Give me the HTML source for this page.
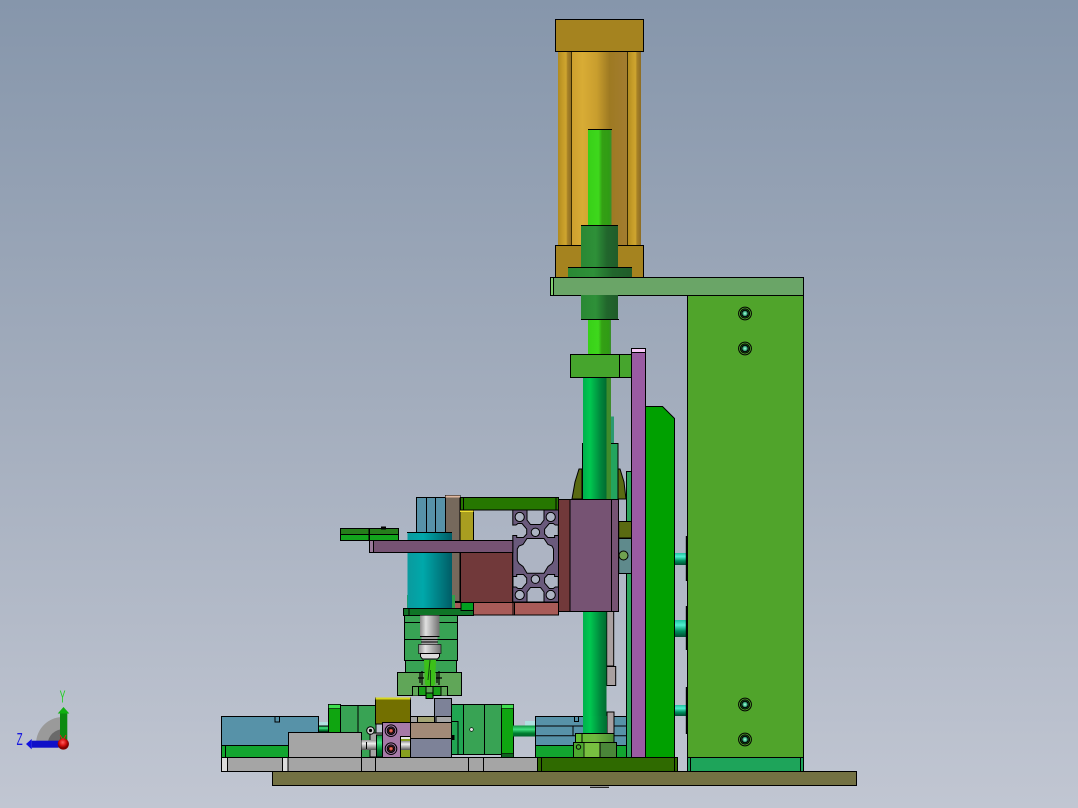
<!DOCTYPE html>
<html>
<head>
<meta charset="utf-8">
<style>
html,body{margin:0;padding:0;width:1078px;height:808px;overflow:hidden;background:#a5aebd}
svg{display:block}
</style>
</head>
<body>
<svg width="1078" height="808" viewBox="0 0 1078 808" xmlns="http://www.w3.org/2000/svg">
<defs>
<linearGradient id="bg" x1="0" y1="0" x2="0" y2="1"><stop offset="0" stop-color="#8696ab"/><stop offset=".5" stop-color="#a3adbd"/><stop offset="1" stop-color="#c1c6d2"/></linearGradient>
<linearGradient id="gold"><stop offset="0" stop-color="#cda02e"/><stop offset=".2" stop-color="#d8ac35"/><stop offset=".45" stop-color="#c99e2e"/><stop offset=".68" stop-color="#9e7a22"/><stop offset="1" stop-color="#a37c30"/></linearGradient>
<linearGradient id="tie"><stop offset="0" stop-color="#b08a20"/><stop offset=".35" stop-color="#c59c28"/><stop offset=".6" stop-color="#cfa530"/><stop offset=".7" stop-color="#a88326"/><stop offset="1" stop-color="#8d6c25"/></linearGradient>
<linearGradient id="rod"><stop offset="0" stop-color="#38d018"/><stop offset=".45" stop-color="#3ed81c"/><stop offset=".6" stop-color="#34a014"/><stop offset=".9" stop-color="#309c14"/><stop offset="1" stop-color="#3c8c30"/></linearGradient>
<linearGradient id="dk"><stop offset="0" stop-color="#2a8834"/><stop offset=".4" stop-color="#2e9038"/><stop offset=".7" stop-color="#21662c"/><stop offset="1" stop-color="#205c2a"/></linearGradient>
<linearGradient id="lr"><stop offset="0" stop-color="#00b04c"/><stop offset=".3" stop-color="#00c850"/><stop offset=".75" stop-color="#00863c"/><stop offset="1" stop-color="#006c30"/></linearGradient>
<linearGradient id="teal"><stop offset="0" stop-color="#0a9a9e"/><stop offset=".35" stop-color="#00a8aa"/><stop offset=".75" stop-color="#007a80"/><stop offset="1" stop-color="#005c66"/></linearGradient>
<linearGradient id="silver"><stop offset="0" stop-color="#8a8a8a"/><stop offset=".3" stop-color="#e0e0e0"/><stop offset=".6" stop-color="#b0b0b0"/><stop offset="1" stop-color="#707070"/></linearGradient>
<linearGradient id="silverV" x1="0" y1="0" x2="0" y2="1"><stop offset="0" stop-color="#909090"/><stop offset=".35" stop-color="#f0f0f0"/><stop offset=".7" stop-color="#a0a0a0"/><stop offset="1" stop-color="#555"/></linearGradient>
<linearGradient id="pin" x1="0" y1="0" x2="0" y2="1"><stop offset="0" stop-color="#20c0a0"/><stop offset=".3" stop-color="#50f0d0"/><stop offset=".65" stop-color="#009060"/><stop offset="1" stop-color="#004a30"/></linearGradient>
<linearGradient id="gpin" x1="0" y1="0" x2="0" y2="1"><stop offset="0" stop-color="#109040"/><stop offset=".35" stop-color="#40e080"/><stop offset=".7" stop-color="#008030"/><stop offset="1" stop-color="#00602a"/></linearGradient>
<linearGradient id="collar"><stop offset="0" stop-color="#60c030"/><stop offset=".5" stop-color="#70b840"/><stop offset="1" stop-color="#4c8c34"/></linearGradient>
<radialGradient id="screw"><stop offset="0" stop-color="#b8ffe8"/><stop offset=".55" stop-color="#40b888"/><stop offset="1" stop-color="#186048"/></radialGradient>
<radialGradient id="red" cx=".45" cy=".35"><stop offset="0" stop-color="#ff6060"/><stop offset=".6" stop-color="#d81010"/><stop offset="1" stop-color="#800000"/></radialGradient>
<radialGradient id="rscrew"><stop offset="0" stop-color="#ff9080"/><stop offset=".6" stop-color="#c04030"/><stop offset="1" stop-color="#501818"/></radialGradient>
<g id="sc"><circle r="6.4" fill="none" stroke="#000" stroke-width="1"/><circle r="4.6" fill="#2a7a30" stroke="#000" stroke-width="1"/><circle r="3.2" fill="url(#screw)"/></g>
<g id="rs"><circle r="5.8" fill="none" stroke="#000" stroke-width="1"/><circle r="3.8" fill="#80506a" stroke="#000" stroke-width="1"/><circle r="2.5" fill="url(#rscrew)"/></g>
<path id="slot" d="M513 525H516L518 523.5H522L526.7 529V534L523.5 537.5H516.7V535.5H513Z" fill="#adb4c3" stroke="#000" stroke-width="1"/>
</defs>
<rect width="1078" height="808" fill="url(#bg)"/>

<g stroke="#000" stroke-width="1">
<!-- air cylinder -->
<rect x="571.5" y="51" width="56" height="195" fill="url(#gold)"/>
<rect x="558" y="51" width="13.5" height="195" fill="url(#tie)" stroke="none"/>
<rect x="627.5" y="51" width="13.5" height="195" fill="url(#tie)" stroke="none"/>
<path d="M571.5 51V246M627.5 51V246" fill="none" stroke="#3a2c00"/>
<rect x="555.5" y="19.5" width="88" height="32" fill="#a5831f"/>
<rect x="555.5" y="245.5" width="88" height="33" fill="#a5831f"/>
<rect x="588" y="129.5" width="23.5" height="96" fill="url(#rod)" stroke="none"/>
<path d="M588 129.5H612" fill="none"/>
<rect x="581" y="225.5" width="37" height="43" fill="url(#dk)" stroke="none"/>
<path d="M581 225.5H618" fill="none"/>
<rect x="568" y="267.5" width="64" height="10" fill="url(#dk)" stroke="none"/>
<path d="M568 267.5H632" fill="none"/>

<!-- right block -->
<rect x="687.5" y="295.5" width="116" height="462" fill="#50a42b"/>
<rect x="687.5" y="757.5" width="116" height="14" fill="#1ea45a"/>
<path d="M690.5 757.5V771M800.5 757.5V771" fill="none"/>
<rect x="550.5" y="277.5" width="253" height="18" fill="#6aa567"/>
<rect x="550.5" y="277.5" width="3" height="18" fill="#80d070"/>
<use href="#sc" x="745" y="313.5"/>
<use href="#sc" x="745" y="348.5"/>
<use href="#sc" x="745" y="704.5"/>
<use href="#sc" x="745" y="739.5"/>

<!-- pins -->
<rect x="674.7" y="553" width="12" height="12" fill="url(#pin)" stroke="none"/>
<rect x="674.7" y="620" width="12" height="17" fill="url(#pin)" stroke="none"/>
<rect x="674.7" y="705" width="12" height="11" fill="url(#pin)" stroke="none"/>
<path d="M686.5 536V581M686.5 606V650M686.5 687V734" fill="none" stroke-width="1.4"/>

<!-- rear column stuff -->
<rect x="611" y="416.5" width="3" height="27" fill="#2a9a70" stroke="none"/>
<path d="M572 499L575 482L579 469H582V499ZM618 469H620L624 482L626 499H618Z" fill="#5a6a12"/>
<rect x="582.5" y="443.5" width="35.5" height="56" fill="#23a45e"/>
<rect x="626.5" y="471.5" width="5" height="286" fill="#2ca45b"/>
<rect x="618.7" y="521.5" width="12.8" height="16.5" fill="#5a6a12"/>
<rect x="618.7" y="538.5" width="12.8" height="35" fill="#5f8a8c"/>
<circle cx="623.5" cy="555.5" r="4.5" fill="#70a050"/>
<rect x="606.7" y="611" width="7" height="55" fill="#a9a0a0"/>
<rect x="606.7" y="666.5" width="9" height="19" fill="#a9a0a0"/>
<rect x="607" y="712" width="7" height="22" fill="#a9a0a0"/>

<!-- long rod -->
<rect x="588" y="319" width="23" height="36" fill="url(#rod)" stroke="none"/>
<rect x="583" y="377" width="23.5" height="357" fill="url(#lr)" stroke="none"/>
<rect x="606.5" y="377" width="4.5" height="122" fill="#3f8c2c" stroke="none"/>
<rect x="581" y="295" width="37" height="24" fill="url(#dk)" stroke="none"/>
<path d="M581 319.5H619" fill="none"/>
<rect x="570.5" y="354.5" width="61" height="23" fill="#46a52d"/>
<path d="M619.5 354.5V377.5" fill="none"/>

<!-- plates -->
<path d="M645.5 406.5H662.5L674.5 418.5V757.5H645.5Z" fill="#00a000"/>
<rect x="631.5" y="352.5" width="14" height="405" fill="#9a5ba2"/>
<rect x="631.5" y="348.5" width="14" height="4" fill="#f8c8f8"/>

<!-- left assembly -->
<rect x="416.5" y="497.5" width="29" height="35" fill="#5792a8"/>
<path d="M426.5 497.5V532M435.5 497.5V532" fill="none"/>
<rect x="445.5" y="495.5" width="14.5" height="106" fill="#76695c"/>
<rect x="445.5" y="495.5" width="14.5" height="2" fill="#e0b8a0" stroke="none"/>
<rect x="460" y="510" width="13.5" height="31" fill="#a99e20"/>
<rect x="460" y="510" width="13.5" height="2" fill="#f0e030" stroke="none"/>
<rect x="460.5" y="497.5" width="98" height="12.5" fill="#267700"/>
<path d="M463.5 497.5V510M556 497.5V510" fill="none"/>
<rect x="460.5" y="552.5" width="52" height="50" fill="#71393a"/>
<rect x="452" y="602.5" width="106.5" height="12.5" fill="#a85b58"/>
<path d="M513 602.5V615M514.5 602.5V615" fill="none"/>
<rect x="558.5" y="499.5" width="11.5" height="112" fill="#71393a"/>
<rect x="570" y="499.5" width="48.5" height="112" fill="#765373"/>
<path d="M611.5 499.5V611.5" fill="none"/>
<rect x="407" y="595" width="48" height="14" fill="#2e9f4a" stroke="none"/>
<rect x="407.5" y="532.5" width="44.5" height="76" fill="url(#teal)" stroke="none"/>
<path d="M407 532.5H452" fill="none"/>

<!-- extrusion -->
<rect x="512.8" y="510" width="45.7" height="92" fill="#6a5a7c"/>
<g fill="#adb4c3">
<circle cx="519.7" cy="517" r="4.6"/>
<circle cx="550.7" cy="517" r="4.6"/>
<circle cx="519.7" cy="595" r="4.6"/>
<circle cx="550.7" cy="595" r="4.6"/>
<circle cx="535.4" cy="532.3" r="4.2"/>
<circle cx="535.4" cy="579.2" r="4.2"/>
<path d="M527 510H544V520L540.5 524.5H530.5L527 520Z"/>
<path d="M527 602H544V592L540.5 587.5H530.5L527 592Z"/>
<path d="M527 538.5H544L548 544.5L552 546L553.5 549V560.5L552 563.5L548 566.5L544 573.3H527L523 566.5L519 563.5L517.3 560.5V549L519 546L523 544.5Z"/>
</g>
<use href="#slot"/>
<use href="#slot" transform="translate(1071.3 0) scale(-1 1)"/>
<use href="#slot" transform="translate(0 1112) scale(1 -1)"/>
<use href="#slot" transform="translate(1071.3 1112) scale(-1 -1)"/>
<rect x="512" y="525.6" width="3" height="9.4" fill="#adb4c3" stroke="none"/>
<rect x="369.5" y="540.5" width="143.3" height="12" fill="#765373"/>
<rect x="369.5" y="540.5" width="4" height="12" fill="#9a7a9a"/>
<rect x="340.5" y="528.5" width="28.5" height="6" fill="#267e1b"/>
<rect x="369.5" y="528.5" width="29" height="6" fill="#267e1b"/>
<rect x="340.5" y="534.5" width="28.5" height="6" fill="#12a51c"/>
<rect x="369.5" y="534.5" width="29" height="6" fill="#12a51c"/>
<rect x="381" y="526.5" width="5" height="3" fill="#000" stroke="none"/>

<!-- spindle -->
<rect x="404.5" y="615.5" width="53" height="45" fill="#38a354"/>
<path d="M404.5 622.5H457.5M404.5 639.5H457.5" fill="none"/>
<rect x="405.5" y="660.5" width="51" height="12" fill="#38a354"/>
<rect x="397.5" y="672.5" width="64" height="23" fill="#60a658"/>
<rect x="403.5" y="608.5" width="70" height="7" fill="#0f7427"/>
<path d="M409 608.5V615.5" fill="none"/>
<rect x="461" y="602.5" width="12.5" height="8" fill="#00a020"/>
<rect x="420" y="615.5" width="19.5" height="21" fill="url(#silver)" stroke="none"/>
<rect x="421.5" y="636.5" width="16" height="8" fill="#a0a0a0" stroke="none"/>
<path d="M420 636.5H439.5M421 639.5H438M421 642H438" fill="none" stroke-width=".9"/>
<rect x="418.5" y="644.5" width="22.5" height="9" fill="url(#silver)" stroke-width=".6"/>
<path d="M420.5 653.5H439.5V656.5L437.5 659H422.5L420.5 656.5Z" fill="#dcdcdc"/>
<path d="M424 660H436L435 684L431 690H429L425 684Z" fill="#3cc018" stroke="none"/>
<path d="M430 660L428 680M430.5 670V690" fill="none" stroke="#104a10"/>
<path d="M420 673V683M422 671V685M437 673V683M439 671V685M418 678H424M436 678H442" fill="none" stroke-width="1.2"/>
<path d="M412.5 695.5V686.5H447.5V695.5" fill="#60a658"/>
<rect x="418.5" y="686.5" width="7.5" height="9" fill="#18a018"/>
<rect x="433" y="686.5" width="8" height="9" fill="#18a018"/>
<rect x="426" y="693" width="7" height="5.5" fill="#18a018"/>

<!-- base left -->
<rect x="221.5" y="716.5" width="97" height="29" fill="#5792a8"/>
<rect x="275" y="716.5" width="4.5" height="5.5" fill="#5792a8"/>
<rect x="221.5" y="745.5" width="67" height="12" fill="#12a52f"/>
<path d="M225.5 745.5V757.5" fill="none"/>
<rect x="319" y="722" width="11" height="4" fill="#b0e0e0" stroke="none"/>
<rect x="318.5" y="726" width="12" height="6" fill="url(#gpin)"/>
<rect x="328.5" y="704.5" width="12" height="29" fill="#0fa510"/>
<rect x="328.5" y="704.5" width="12" height="4" fill="#40e050" stroke-width=".6"/>
<rect x="340.5" y="705.5" width="17.5" height="52" fill="#38a354"/>
<rect x="358" y="705.5" width="18" height="52" fill="#38a354"/>
<rect x="288.5" y="732.5" width="73" height="25" fill="#a5a5a5"/>
<rect x="370" y="733" width="13" height="24" fill="#a5a5a5"/>
<rect x="361.5" y="740" width="15" height="10" fill="url(#silverV)" stroke="none"/>
<path d="M366.5 742V749" fill="none"/>
<circle cx="370.5" cy="730.5" r="3.8" fill="#d0d0d0"/>
<circle cx="370.5" cy="730.5" r="1.6" fill="#000" stroke="none"/>
<rect x="376.5" y="735" width="6" height="22" fill="url(#gpin)"/>
<rect x="375.5" y="698" width="35" height="26" fill="#737000"/>
<rect x="375.5" y="697.5" width="35" height="2" fill="#d8d820" stroke="none"/>
<rect x="417" y="716.5" width="18" height="6" fill="#a5a575"/>
<rect x="410.5" y="716.5" width="7" height="6" fill="#a5a5a5"/>
<rect x="434.5" y="698.5" width="17" height="24" fill="#7d8298"/>
<rect x="436" y="716.5" width="15.5" height="6" fill="#a5a5a5"/>
<rect x="451.5" y="704.5" width="12" height="50" fill="#20a552"/>
<rect x="463.5" y="704.5" width="21" height="50" fill="#38a354"/>
<rect x="484.5" y="704.5" width="17" height="50" fill="#38a354"/>
<circle cx="471.5" cy="729.5" r="1.8" fill="#e8e8e8" stroke-width=".6"/>
<path d="M451.5 721.5H458V754" fill="none"/>
<rect x="501.5" y="704.5" width="12" height="53" fill="#0fa510"/>
<rect x="501.5" y="704.5" width="12" height="4" fill="#40e050" stroke-width=".6"/>
<rect x="501.5" y="753.5" width="12" height="4" fill="#0f6420" stroke-width=".6"/>
<rect x="513" y="725.5" width="22" height="11" fill="url(#gpin)" stroke="none"/>
<rect x="525" y="721" width="10" height="4.5" fill="#b0e0e0" stroke="none"/>
<rect x="382.5" y="722.5" width="28" height="35" fill="#a67aa8"/>
<rect x="400.5" y="736.5" width="10" height="21" fill="#88a020"/>
<rect x="401" y="737" width="9.5" height="2" fill="#e8e8e8" stroke="none"/>
<rect x="401" y="741" width="9.5" height="9" fill="url(#silverV)" stroke="none"/>
<use href="#rs" x="391" y="730.7"/>
<use href="#rs" x="391" y="748.7"/>
<rect x="410.5" y="722.5" width="41" height="16" fill="#a28a78"/>
<rect x="410.5" y="738.5" width="41" height="19" fill="#7d8298"/>
<rect x="451.5" y="735" width="3" height="5" fill="#000" stroke="none"/>

<!-- base right -->
<rect x="535.5" y="716.5" width="91" height="29" fill="#5792a8"/>
<path d="M535.5 726H626.5M535.5 735.7H626.5M573 726V735.7" fill="none"/>
<rect x="574.5" y="716.5" width="4" height="5" fill="#5792a8"/>
<rect x="535.5" y="745.5" width="40" height="12" fill="#12a52f"/>
<rect x="614" y="745.5" width="12.5" height="12" fill="#12a52f"/>
<rect x="607" y="712" width="7" height="22" fill="#a9a0a0"/>
<rect x="583" y="716" width="24" height="18" fill="url(#lr)" stroke="none"/>
<rect x="575.5" y="733.5" width="38.5" height="9" fill="url(#collar)"/>
<path d="M582 733.5V742" fill="none"/>
<rect x="573.5" y="742.5" width="43" height="15" fill="#4ea830"/>
<rect x="584" y="742.5" width="16" height="15" fill="#78c040" stroke-width=".8"/>
<rect x="600" y="742.5" width="16.5" height="15" fill="#4a8638"/>
<circle cx="578.5" cy="747" r="2.2" fill="none"/>

<!-- base strip -->
<rect x="221.5" y="757.5" width="317" height="14" fill="#a5a5a5"/>
<rect x="221.5" y="757.5" width="6" height="14" fill="#dcdcdc"/>
<rect x="282.5" y="757.5" width="5.5" height="14" fill="#dcdcdc"/>
<path d="M361.5 757.5V771.5M375.5 757.5V771.5M468.5 757.5V771.5M483.5 757.5V771.5" fill="none"/>
<rect x="537.5" y="757.5" width="140" height="14" fill="#2f6a00"/>
<path d="M541.5 757.5V771.5M674.5 757.5V771.5" fill="none"/>
<rect x="272.5" y="771.5" width="584" height="14" fill="#737143"/>
<rect x="590" y="786" width="19" height="2" fill="#9a9a9a" stroke="none"/>
<path d="M590 787.5H609" fill="none" stroke-width=".7"/>
</g>

<!-- triad -->
<path d="M36 744A27 27 0 0 1 63 717V744Z" fill="#9a9a9a"/>
<path d="M47.7 744A15 15 0 0 1 63 729.3V744Z" fill="#6a6a6a"/>
<rect x="60" y="713" width="7.3" height="28" fill="#0c8a10"/>
<path d="M57.7 713.5L63.5 707L69.3 713.5Z" fill="#10b010"/>
<rect x="31.7" y="740.7" width="27" height="7" fill="#1010c8"/>
<path d="M31.7 739V749.4L26 744Z" fill="#1010e0"/>
<circle cx="63.3" cy="744" r="5.6" fill="url(#red)"/>
<path d="M60 735L63 740L66 735" fill="none" stroke="#e02020" stroke-width="1"/>
<text transform="translate(62.6 702.7) scale(.5 1)" font-family="Liberation Sans, sans-serif" font-size="17.5" fill="#20d020" text-anchor="middle">Y</text>
<text transform="translate(19.7 745) scale(.55 1)" font-family="Liberation Sans, sans-serif" font-size="18" fill="#1818e0" text-anchor="middle">Z</text>
</svg>
</body>
</html>
